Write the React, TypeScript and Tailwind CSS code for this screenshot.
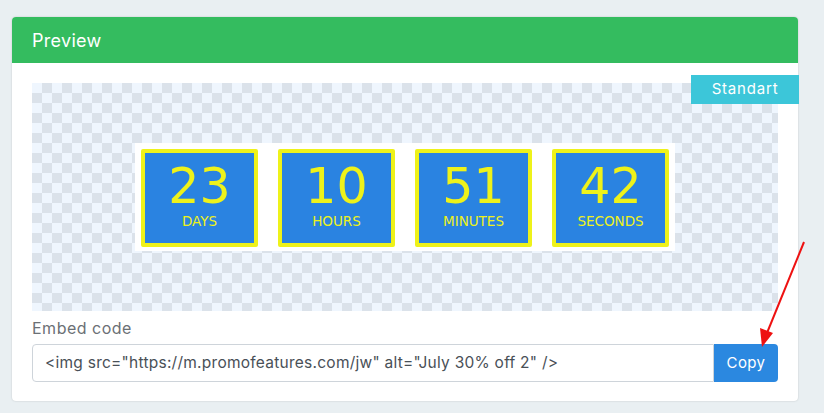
import React from "react";

const blocks = [
  { n: "23", l: "DAYS" },
  { n: "10", l: "HOURS" },
  { n: "51", l: "MINUTES" },
  { n: "42", l: "SECONDS" },
];

export default function App() {
  return (
    <div className="relative min-h-[413px] w-[824px] bg-[#e9eff2] pt-[17px] pl-[12px] font-['Inter','Open_Sans',sans-serif]">
      <div className="relative w-[786px] rounded-[4px] bg-white shadow-[0_0_2px_rgba(0,0,0,0.18)]">
        <div className="flex h-[46px] items-center rounded-t-[4px] bg-[#34bc5f] px-5 text-[18px] tracking-[0.3px] text-white">
          Preview
        </div>
        <div className="absolute right-[-1px] top-[58px] flex h-[29px] w-[108px] items-center justify-center bg-[#3cc6d9] text-[15px] tracking-[0.8px] text-white">
          Standart
        </div>
        <div className="px-5 pt-5 pb-[19px]">
          <div className="flex h-[228px] items-center justify-center bg-[image:conic-gradient(#dbe2ea_25%,#eff6fe_0_50%,#dbe2ea_0_75%,#eff6fe_0)] bg-[length:20px_20px]">
            <div className="flex gap-5 bg-white px-[6px] pt-[6px] pb-[4px]">
              {blocks.map((b) => (
                <div
                  key={b.l}
                  className="flex h-[98px] w-[117px] flex-col items-center rounded-[2px] border-4 border-[#eef21a] bg-[#2a83e1] pt-[11px] font-['DejaVu_Sans',sans-serif] text-[#eef21a]"
                >
                  <div className="text-[49px] leading-[46px]">{b.n}</div>
                  <div className="mt-[4px] text-[13.5px] leading-[15px]">{b.l}</div>
                </div>
              ))}
            </div>
          </div>
          <div className="mt-[7px] text-[16px] leading-[20px] tracking-[0.5px] text-[#6b7075]">Embed code</div>
          <div className="mt-[6px] flex h-[38px]">
            <div className="flex flex-1 items-center rounded-l-[4px] border border-[#ced4da] px-3 text-[15.5px] tracking-[0.25px] text-[#495057]">
              {'<img src="https://m.promofeatures.com/jw" alt="July 30% off 2" />'}
            </div>
            <button className="flex w-[64px] items-center justify-center rounded-r-[4px] bg-[#2b88e0] text-[15px] tracking-[0.4px] text-white">
              Copy
            </button>
          </div>
        </div>
      </div>
      <svg className="absolute left-0 top-0" width="824" height="413" viewBox="0 0 824 413">
        <line x1="804" y1="242" x2="767" y2="333" stroke="#ee1111" strokeWidth="2" />
        <polygon points="762,347 760,328 773,333" fill="#ee1111" />
      </svg>
    </div>
  );
}
